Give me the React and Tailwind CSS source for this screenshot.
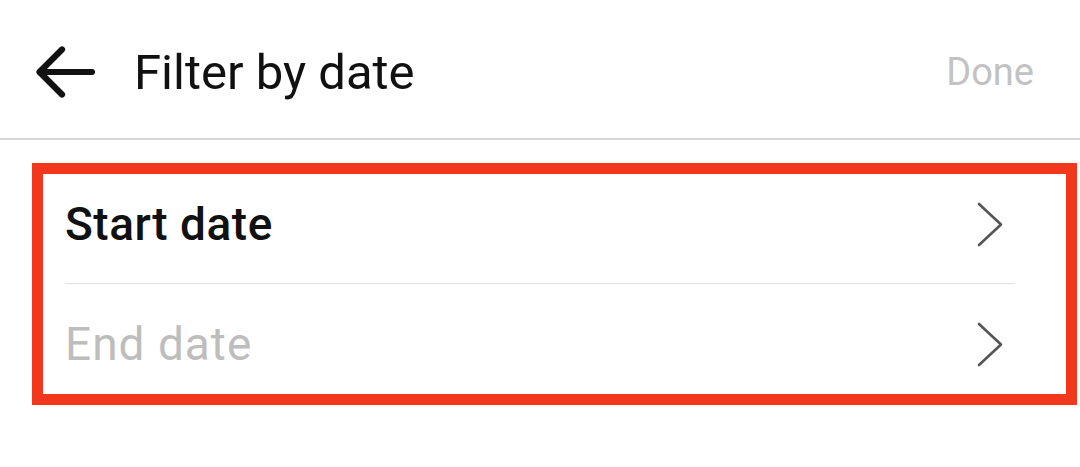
export default function App() {
  return (
    <div className="w-[1080px] h-[467px] bg-white font-['Roboto','Liberation_Sans',sans-serif] overflow-hidden">
      <div className="flex h-[138px] items-center pt-[6px] pl-[35px] pr-[46px]">
        <svg width="60" height="54" viewBox="0 0 60 54" fill="none" stroke="#111" strokeWidth="6.2" strokeLinecap="round" strokeLinejoin="round">
          <path d="M4.5 27 H57 M27 4.5 L4.5 27 L27 49.5" />
        </svg>
        <div className="ml-[39px] text-[49px] leading-none text-[#111]">Filter by date</div>
        <div className="ml-auto text-[38px] leading-none text-[#c2c2c2]">Done</div>
      </div>
      <div className="h-[2px] bg-[#d6d6d6]" />
      <div className="mt-[23px] ml-[32px] w-[1045px] border-[11px] border-[#f2381c]">
        <div className="flex h-[109px] items-center pb-[9px] pl-[22px] pr-[63px]">
          <div className="text-[46px] font-medium leading-none tracking-[0.5px] text-[#111]">Start date</div>
          <Chevron />
        </div>
        <div className="ml-[22px] mr-[51px] h-px bg-[#e2e2e2]" />
        <div className="flex h-[110px] items-center pt-[10px] pl-[22px] pr-[63px]">
          <div className="text-[46px] leading-none tracking-[1px] text-[#bdbdbd]">End date</div>
          <Chevron />
        </div>
      </div>
    </div>
  );
}

function Chevron() {
  return (
    <svg className="ml-auto" width="26" height="45" viewBox="0 0 26 45" fill="none" stroke="#555" strokeWidth="2.6" strokeLinecap="round" strokeLinejoin="round">
      <path d="M2 2 L24 22.5 L2 43" />
    </svg>
  );
}
